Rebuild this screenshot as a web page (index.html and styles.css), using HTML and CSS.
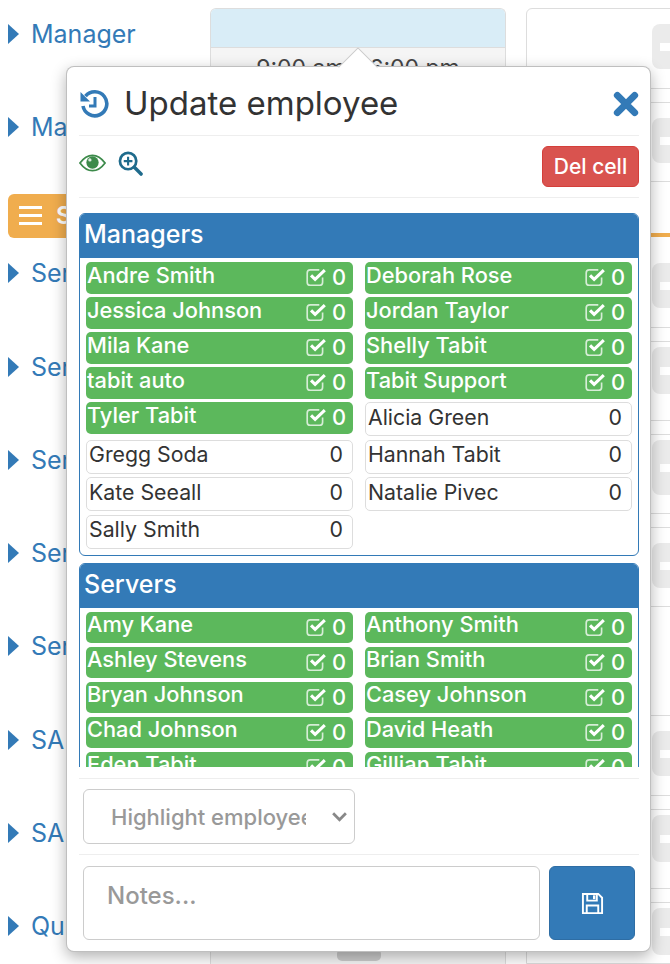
FILE: index.html
```html
<!DOCTYPE html>
<html lang="en">
<head>
<meta charset="utf-8">
<title>Update employee</title>
<link rel="stylesheet" href="styles.css">
</head>
<body>
<svg class="defs" width="0" height="0" aria-hidden="true">
  <symbol id="chk" viewBox="0 0 20 20">
    <path d="M16 10.500v4.200A2.800 2.800 0 0 1 13.200 17.500H4.800A2.800 2.800 0 0 1 2 14.700V6.300A2.800 2.800 0 0 1 4.800 3.500H13" fill="none" stroke="currentColor" stroke-width="1.500" opacity=".75"/>
    <path d="M5.500 8.500l3.700 3.700L18 3.800" fill="none" stroke="currentColor" stroke-width="2.800"/>
  </symbol>
</svg>
<div class="page">
  <ul class="names">
    <li class="name"><i class="tri"></i>Manager</li>
    <li class="name"><i class="tri"></i>Manager</li>
    <li class="shift"><span class="burger"><i></i><i></i><i></i></span>Servers</li>
    <li class="name"><i class="tri"></i>Server</li>
    <li class="name"><i class="tri"></i>Server</li>
    <li class="name"><i class="tri"></i>Server</li>
    <li class="name"><i class="tri"></i>Server</li>
    <li class="name"><i class="tri"></i>Server</li>
    <li class="name"><i class="tri"></i>SA</li>
    <li class="name"><i class="tri"></i>SA</li>
    <li class="name"><i class="tri"></i>Quick</li>
  </ul>
  <section class="day">
    <div class="day-head"></div>
    <div class="day-hours">9:00 am - 6:00 pm</div>
    <div class="day-tab"></div>
  </section>
  <section class="grid-col">
    <div class="slot"><b></b></div>
    <div class="slot gap"><b></b></div>
    <div class="slot blank orange"></div>
    <div class="slot"><b></b></div>
    <div class="slot gap"><b class="hi"></b></div>
    <div class="slot gap"><b class="hi2"></b></div>
    <div class="slot gap"><b></b></div>
    <div class="slot tall"></div>
    <div class="slot"><b></b></div>
    <div class="slot gap"><b class="hi"></b></div>
    <div class="slot gap"><b class="hi"></b></div>
  </section>
</div>

<div class="popover">
  <i class="arrow"></i>
  <header class="pop-head">
    <svg class="ico-history" viewBox="0 0 30 30" aria-hidden="true">
      <path d="M6.500 8.200A12 12 0 1 1 4 18" fill="none" stroke="#337ab7" stroke-width="3.600"/>
      <path d="M1.500 4v9.500H11z" fill="#337ab7"/>
      <path d="M16 9v9h-6" fill="none" stroke="#337ab7" stroke-width="3"/>
    </svg>
    <h1 class="pop-title">Update employee</h1>
    <svg class="ico-close" viewBox="0 0 24 24" aria-hidden="true">
      <path d="M4 4l16 16M20 4L4 20" stroke="#337ab7" stroke-width="6.400" stroke-linecap="round"/>
    </svg>
  </header>
  <div class="pop-tools">
    <svg class="ico-eye" viewBox="0 0 28 18" aria-hidden="true">
      <path d="M1 9C5 3.500 9 1 14 1s9 2.500 13 8c-4 5.500-8 8-13 8S5 14.500 1 9z" fill="none" stroke="#3c8a4a" stroke-width="1.800"/>
      <circle cx="14" cy="8.500" r="6.400" fill="#3c8a4a"/>
      <circle cx="11.300" cy="5.800" r="1.700" fill="#fff" opacity=".85"/>
    </svg>
    <svg class="ico-zoom" viewBox="0 0 26 26" aria-hidden="true">
      <circle cx="10.500" cy="10.500" r="8.500" fill="none" stroke="#1f6b8c" stroke-width="2.800"/>
      <path d="M6 10.500h9M10.500 6v9" stroke="#1f6b8c" stroke-width="2.200"/>
      <path d="M17 17l7 7" stroke="#1f6b8c" stroke-width="3.600" stroke-linecap="round"/>
    </svg>
    <button class="del" type="button">Del cell</button>
  </div>
  <div class="scroller">
    <section class="panel">
      <h2 class="panel-head">Managers</h2>
      <div class="people">
        <div class="pill on"><span>Andre Smith</span><svg class="chk"><use href="#chk"/></svg><em>0</em></div>
        <div class="pill on"><span>Deborah Rose</span><svg class="chk"><use href="#chk"/></svg><em>0</em></div>
        <div class="pill on"><span>Jessica Johnson</span><svg class="chk"><use href="#chk"/></svg><em>0</em></div>
        <div class="pill on"><span>Jordan Taylor</span><svg class="chk"><use href="#chk"/></svg><em>0</em></div>
        <div class="pill on"><span>Mila Kane</span><svg class="chk"><use href="#chk"/></svg><em>0</em></div>
        <div class="pill on"><span>Shelly Tabit</span><svg class="chk"><use href="#chk"/></svg><em>0</em></div>
        <div class="pill on"><span>tabit auto</span><svg class="chk"><use href="#chk"/></svg><em>0</em></div>
        <div class="pill on"><span>Tabit Support</span><svg class="chk"><use href="#chk"/></svg><em>0</em></div>
        <div class="pill on"><span>Tyler Tabit</span><svg class="chk"><use href="#chk"/></svg><em>0</em></div>
        <div class="pill"><span>Alicia Green</span><em>0</em></div>
        <div class="pill"><span>Gregg Soda</span><em>0</em></div>
        <div class="pill"><span>Hannah Tabit</span><em>0</em></div>
        <div class="pill"><span>Kate Seeall</span><em>0</em></div>
        <div class="pill"><span>Natalie Pivec</span><em>0</em></div>
        <div class="pill"><span>Sally Smith</span><em>0</em></div>
      </div>
    </section>
    <section class="panel">
      <h2 class="panel-head">Servers</h2>
      <div class="people">
        <div class="pill on"><span>Amy Kane</span><svg class="chk"><use href="#chk"/></svg><em>0</em></div>
        <div class="pill on"><span>Anthony Smith</span><svg class="chk"><use href="#chk"/></svg><em>0</em></div>
        <div class="pill on"><span>Ashley Stevens</span><svg class="chk"><use href="#chk"/></svg><em>0</em></div>
        <div class="pill on"><span>Brian Smith</span><svg class="chk"><use href="#chk"/></svg><em>0</em></div>
        <div class="pill on"><span>Bryan Johnson</span><svg class="chk"><use href="#chk"/></svg><em>0</em></div>
        <div class="pill on"><span>Casey Johnson</span><svg class="chk"><use href="#chk"/></svg><em>0</em></div>
        <div class="pill on"><span>Chad Johnson</span><svg class="chk"><use href="#chk"/></svg><em>0</em></div>
        <div class="pill on"><span>David Heath</span><svg class="chk"><use href="#chk"/></svg><em>0</em></div>
        <div class="pill on"><span>Eden Tabit</span><svg class="chk"><use href="#chk"/></svg><em>0</em></div>
        <div class="pill on"><span>Gillian Tabit</span><svg class="chk"><use href="#chk"/></svg><em>0</em></div>
      </div>
    </section>
  </div>
  <div class="pop-select">
    <div class="select-wrap">
      <select class="select">
        <option>Highlight employee</option>
      </select>
      <svg class="chev" viewBox="0 0 16 10" aria-hidden="true"><path d="M2 2l6 6 6-6" fill="none" stroke="#888" stroke-width="2.600"/></svg>
    </div>
  </div>
  <div class="pop-notes">
    <textarea class="notes" placeholder="Notes..."></textarea>
    <button class="save" type="button" aria-label="Save">
      <svg viewBox="0 0 24 24" aria-hidden="true">
        <path d="M2 2h16l4 4v16H2z" fill="none" stroke="#fff" stroke-width="2"/>
        <path d="M6.500 2v7h10V2" fill="none" stroke="#fff" stroke-width="2"/>
        <path d="M12.500 3.500h2.500v4h-2.500z" fill="#fff"/>
        <path d="M6 22v-8h12v8" fill="none" stroke="#fff" stroke-width="2"/>
      </svg>
    </button>
  </div>
</div>
</body>
</html>
```

FILE: styles.css
```css
* { box-sizing: border-box; }
html, body { margin: 0; padding: 0; }
body {
  width: 670px;
  height: 964px;
  overflow: hidden;
  position: relative;
  background: #fff;
  font-family: Inter, "Noto Sans", sans-serif;
  color: #333;
}
.defs { position: absolute; }
.page { display: flex; height: 964px; }

/* left column */
.names {
  list-style: none;
  margin: 0;
  padding: 0 0 0 8px;
  width: 210px;
  flex: none;
}
.name {
  display: flex;
  align-items: center;
  gap: 12px;
  color: #337ab7;
  font-size: 25px;
  height: 93.300px;
  white-space: nowrap;
}
.names .name:first-child { margin-top: -13px; }
.tri {
  width: 0;
  height: 0;
  border-left: 11px solid #337ab7;
  border-top: 10px solid transparent;
  border-bottom: 10px solid transparent;
}
.shift {
  display: flex;
  align-items: center;
  gap: 14px;
  height: 44px;
  margin: 20px 0 -11px;
  width: 80px;
  padding-left: 11px;
  background: #f0ad4e;
  border-radius: 6px;
  color: #fff;
  font-size: 24px;
  font-weight: 600;
  overflow: hidden;
}
.burger { display: flex; flex-direction: column; gap: 5px; }
.burger i { display: block; width: 23px; height: 3px; background: #fff; }

/* day column */
.day {
  width: 296px;
  flex: none;
  margin-top: 8px;
  border: 1px solid #ddd;
  border-bottom: 0;
  border-radius: 6px 6px 0 0;
  display: flex;
  flex-direction: column;
  position: relative;
}
.day-head { height: 39px; background: #d9edf7; border-bottom: 1px solid #ddd; border-radius: 5px 5px 0 0; }
.day-hours {
  flex: 1;
  background: #f5f5f5;
  font-size: 23px;
  text-align: center;
  padding-top: 6px;
  color: #444;
}
.day-tab {
  position: absolute;
  left: 126px;
  bottom: 3px;
  width: 44px;
  height: 12px;
  background: #ccc;
  border-radius: 5px;
}

/* right column */
.grid-col {
  width: 160px;
  flex: none;
  margin: 8px 0 0 20px;
  border: 1px solid #ddd;
  border-radius: 6px 0 0 0;
}
.slot {
  height: 80px;
  border-bottom: 1px solid #ddd;
  padding: 15px 0 0 125px;
}
.slot.gap { margin-top: 13px; border-top: 1px solid #ddd; }
.slot b {
  display: flex;
  align-items: center;
  width: 30px;
  height: 45px;
  background: #ebebeb;
  border-radius: 8px;
}
.slot b::after { content: ""; width: 12px; height: 8px; margin-left: 8px; background: #fff; }
.slot b.hi { margin-top: -10px; height: 47px; }
.slot b.hi2 { margin-top: -10px; height: 55px; }
.slot.blank { height: 52px; border-bottom: 0; }
.slot.orange { border-bottom: 4px solid #f0ad4e; margin-bottom: 11px; height: 55px; }
.slot.tall { height: 109px; }

/* popover */
.popover {
  position: absolute;
  left: 66px;
  top: 66px;
  width: 585px;
  height: 886px;
  padding: 0 11px 0 12px;
  background: #fff;
  border: 1px solid rgba(0, 0, 0, .25);
  border-radius: 8px;
  box-shadow: 0 5px 15px rgba(0, 0, 0, .3);
}
.arrow {
  position: absolute;
  left: 277px;
  top: -14px;
  width: 28px;
  height: 28px;
  background: #fff;
  border-left: 1px solid #ccc;
  border-top: 1px solid #ccc;
  transform: rotate(45deg);
}
.pop-head {
  display: flex;
  align-items: center;
  height: 69px;
  padding-top: 3px;
  border-bottom: 1px solid #eee;
  position: relative;
}
.ico-history { width: 30px; height: 30px; flex: none; margin-right: 15px; }
.pop-title { flex: 1; margin: 0; font-size: 33px; font-weight: 400; color: #333; }
.ico-close { width: 26px; height: 26px; flex: none; margin-top: 3px; }
.pop-tools {
  display: flex;
  align-items: flex-start;
  height: 62px;
  padding-top: 10px;
  border-bottom: 1px solid #eee;
}
.ico-eye { width: 27px; height: 18px; margin-top: 8px; }
.ico-zoom { width: 25px; height: 25px; margin: 5px 0 0 12px; }
.del {
  margin-left: auto;
  height: 41px;
  width: 97px;
  padding: 0;
  color: #fff;
  background: #d9534f;
  border: 1px solid #d43f3a;
  border-radius: 6px;
  font: 500 21px Inter, "Noto Sans", sans-serif;
}
.scroller { height: 554px; margin-top: 15px; overflow: hidden; }
.panel {
  border: 1px solid #337ab7;
  border-radius: 6px;
  margin-bottom: 7px;
  padding-bottom: 6px;
}
.panel-head {
  margin: 0;
  height: 44px;
  padding-left: 4px;
  background: #337ab7;
  border-radius: 5px 5px 0 0;
  color: #fff;
  font-size: 25px;
  font-weight: 500;
  line-height: 41px;
}
.people {
  display: grid;
  grid-template-columns: 267px 267px;
  column-gap: 12px;
  row-gap: 3.500px;
  align-items: start;
  padding: 4px 6px 0;
}
.pill {
  display: flex;
  align-items: center;
  height: 34px;
  padding: 0 9px 5px 2px;
  font-size: 21.300px;
  background: #fff;
  border: 1px solid #ddd;
  border-radius: 5px;
  color: #333;
}
.pill span { flex: 1; white-space: nowrap; }
.pill em { font-style: normal; }
.pill.on {
  height: 31.500px;
  padding: 0 7px 1px 1px;
  font-size: 21.800px;
  background: #5cb85c;
  border: 0;
  color: #fff;
  font-weight: 500;
}
.pill.on span { margin-bottom: 5px; }
.chk { width: 22px; height: 22px; margin-right: 5px; color: #fff; }
.pop-select {
  height: 77px;
  margin-top: 11px;
  border-top: 1px solid #eee;
  border-bottom: 1px solid #eee;
  padding: 10px 0 0 4px;
}
.select-wrap { position: relative; width: 272px; }
.select {
  display: block;
  width: 272px;
  height: 55px;
  padding: 0 48px 0 27px;
  appearance: none;
  background: #fff;
  border: 1px solid #ccc;
  border-radius: 6px;
  color: #999;
  font: 500 22px Inter, "Noto Sans", sans-serif;
}
.chev { position: absolute; right: 7px; top: 22px; width: 17px; height: 11px; }
.pop-notes { display: flex; gap: 9px; padding: 11px 4px 0; }
.notes {
  width: 459px;
  height: 74px;
  resize: none;
  padding: 14px 23px;
  border: 1px solid #ccc;
  border-radius: 6px;
  font: 500 24px Inter, "Noto Sans", sans-serif;
  color: #333;
  overflow: hidden;
}
.notes::placeholder { color: #999; }
.save {
  width: 86px;
  height: 74px;
  padding: 0;
  background: #337ab7;
  border: 1px solid #2e6da4;
  border-radius: 6px;
  display: flex;
  align-items: center;
  justify-content: center;
}
.save svg { width: 23px; height: 23px; }
```
